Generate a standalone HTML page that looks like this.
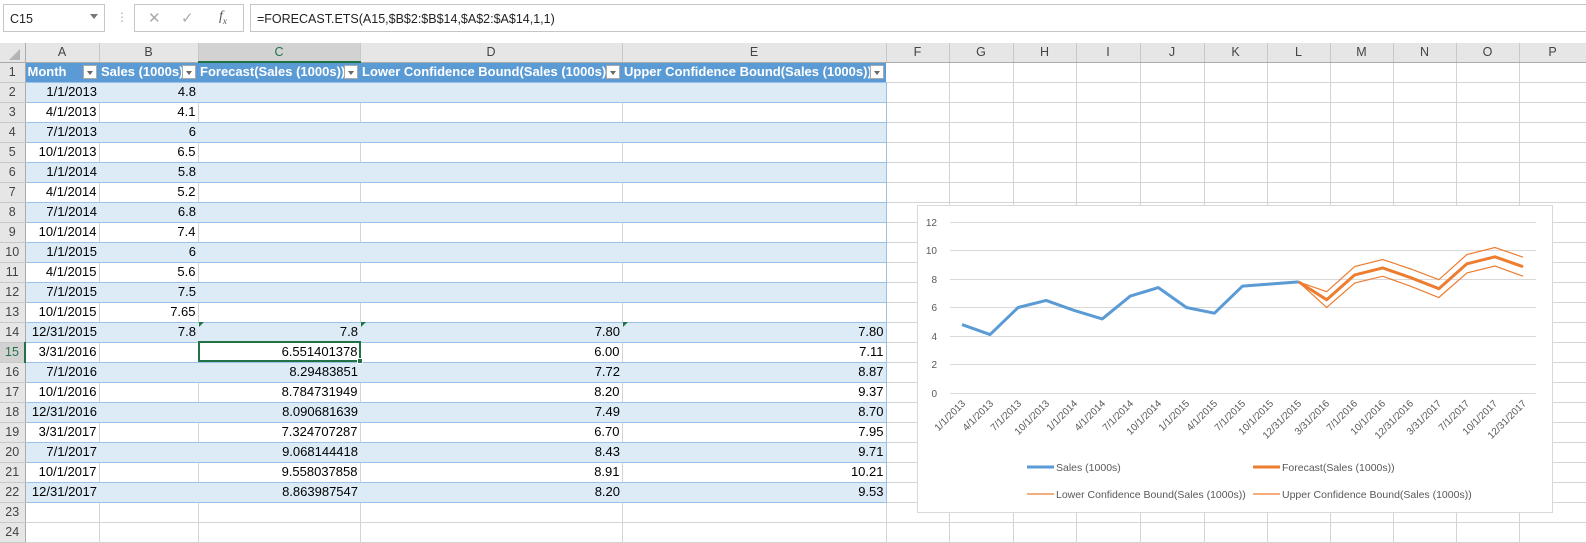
<!DOCTYPE html>
<html><head><meta charset="utf-8">
<style>
*{margin:0;padding:0;box-sizing:border-box}
body{width:1586px;height:530px;overflow:hidden;background:#fff;font-family:"Liberation Sans",sans-serif;font-size:13px;color:#000;position:relative}
.top{position:absolute;left:0;top:0;width:1586px;height:43px;background:#fff}
.nb{position:absolute;left:3px;top:4px;width:102px;height:28px;border:1px solid #c6c6c6;background:#fff;font-size:12.5px;padding:7px 0 0 6px;color:#222}
.nb span{position:absolute;right:6px;top:9px;width:0;height:0;border-left:4px solid transparent;border-right:4px solid transparent;border-top:5px solid #777}
.dots{position:absolute;left:116px;top:10px;color:#aaa;font-size:12px}
.fx{position:absolute;left:134px;top:4px;width:110px;height:28px;border:1px solid #c6c6c6;background:#fff;color:#aaa}
.fb{position:absolute;left:250px;top:4px;width:1336px;height:28px;border:1px solid #c6c6c6;border-right:none;background:#fff;font-size:12.5px;padding:7px 0 0 6px;color:#222}
table{position:absolute;left:0;top:43px;width:1586px;border-collapse:collapse;table-layout:fixed}
td{height:20px;border-right:1px solid #d4d4d4;border-bottom:1px solid #d4d4d4;white-space:nowrap;overflow:hidden;padding:0 2px;font-size:13px;line-height:18px}
tr.h td{height:19px;background:#e6e6e6;color:#444;text-align:center;border-right:1px solid #c8c8c8;border-bottom:1px solid #ababab;font-size:12.5px}
td.rh{background:#e6e6e6;color:#444;text-align:center;border-right:1px solid #ababab;border-bottom:1px solid #c8c8c8;padding:0;font-size:12.5px}
tr.t1 td.c{background:#5b9bd5;color:#fff;font-weight:bold;border-right:none;border-bottom:1px solid #9bc2e6;position:relative;padding-right:16px;text-align:left}
.dd{position:absolute;right:2px;top:2px;width:14px;height:14px;background:#fff;border:1px solid #aaa}
.dd:after{content:"";position:absolute;left:3px;top:5px;border-left:3.5px solid transparent;border-right:3.5px solid transparent;border-top:4px solid #666}
tr.b td.c{background:#ddebf7;border-right:none;border-bottom:1px solid #9bc2e6;text-align:right}
tr.w td.c{border-bottom:1px solid #9bc2e6;text-align:right}
td.e{border-right:1px solid #9bc2e6 !important}
.sel{position:absolute;left:198px;top:341px;width:163px;height:21px;border:2px solid #217346}
.hnd{position:absolute;left:357px;top:358px;width:6px;height:6px;background:#217346;border:1px solid #fff}
.tri{position:absolute;width:0;height:0;border-top:5px solid #217346;border-right:5px solid transparent}
.corner{position:absolute;left:9px;top:49px;width:0;height:0;border-left:11px solid transparent;border-bottom:11px solid #b4b4b4}
</style></head><body>
<div class="top">
<div class="nb">C15<span></span></div>
<div class="dots">⋮</div>
<div class="fx"><span style="position:absolute;left:13px;top:4px;font-size:15px">✕</span><span style="position:absolute;left:46px;top:4px;font-size:15px">✓</span><span style="position:absolute;left:84px;top:4px;font-style:italic;font-family:'Liberation Serif',serif;color:#555;font-size:14px">f<sub style="font-size:9px">x</sub></span></div>
<div class="fb">=FORECAST.ETS(A15,$B$2:$B$14,$A$2:$A$14,1,1)</div>
</div>
<table>
<colgroup><col style="width:25px"><col style="width:74px"><col style="width:99px"><col style="width:162px"><col style="width:262px"><col style="width:264px"><col style="width:63px"><col style="width:64px"><col style="width:63px"><col style="width:64px"><col style="width:64px"><col style="width:63px"><col style="width:63px"><col style="width:63px"><col style="width:63px"><col style="width:63px"><col style="width:67px"></colgroup>
<tr class="h"><td style="border-right:1px solid #ababab"></td><td>A</td><td>B</td><td style="background:#d2d2d2;color:#217346;border-bottom:2px solid #217346">C</td><td>D</td><td>E</td><td>F</td><td>G</td><td>H</td><td>I</td><td>J</td><td>K</td><td>L</td><td>M</td><td>N</td><td>O</td><td>P</td></tr>
<tr class="t1"><td class="rh">1</td><td class="c">Month<span class="dd"></span></td><td class="c">Sales (1000s)<span class="dd"></span></td><td class="c">Forecast(Sales (1000s))<span class="dd"></span></td><td class="c">Lower Confidence Bound(Sales (1000s))<span class="dd"></span></td><td class="c">Upper Confidence Bound(Sales (1000s))<span class="dd"></span></td><td></td><td></td><td></td><td></td><td></td><td></td><td></td><td></td><td></td><td></td><td></td></tr>
<tr class="b"><td class="rh">2</td><td class="c">1/1/2013</td><td class="c">4.8</td><td class="c"></td><td class="c"></td><td class="c e"></td><td></td><td></td><td></td><td></td><td></td><td></td><td></td><td></td><td></td><td></td><td></td></tr>
<tr class="w"><td class="rh">3</td><td class="c">4/1/2013</td><td class="c">4.1</td><td class="c"></td><td class="c"></td><td class="c e"></td><td></td><td></td><td></td><td></td><td></td><td></td><td></td><td></td><td></td><td></td><td></td></tr>
<tr class="b"><td class="rh">4</td><td class="c">7/1/2013</td><td class="c">6</td><td class="c"></td><td class="c"></td><td class="c e"></td><td></td><td></td><td></td><td></td><td></td><td></td><td></td><td></td><td></td><td></td><td></td></tr>
<tr class="w"><td class="rh">5</td><td class="c">10/1/2013</td><td class="c">6.5</td><td class="c"></td><td class="c"></td><td class="c e"></td><td></td><td></td><td></td><td></td><td></td><td></td><td></td><td></td><td></td><td></td><td></td></tr>
<tr class="b"><td class="rh">6</td><td class="c">1/1/2014</td><td class="c">5.8</td><td class="c"></td><td class="c"></td><td class="c e"></td><td></td><td></td><td></td><td></td><td></td><td></td><td></td><td></td><td></td><td></td><td></td></tr>
<tr class="w"><td class="rh">7</td><td class="c">4/1/2014</td><td class="c">5.2</td><td class="c"></td><td class="c"></td><td class="c e"></td><td></td><td></td><td></td><td></td><td></td><td></td><td></td><td></td><td></td><td></td><td></td></tr>
<tr class="b"><td class="rh">8</td><td class="c">7/1/2014</td><td class="c">6.8</td><td class="c"></td><td class="c"></td><td class="c e"></td><td></td><td></td><td></td><td></td><td></td><td></td><td></td><td></td><td></td><td></td><td></td></tr>
<tr class="w"><td class="rh">9</td><td class="c">10/1/2014</td><td class="c">7.4</td><td class="c"></td><td class="c"></td><td class="c e"></td><td></td><td></td><td></td><td></td><td></td><td></td><td></td><td></td><td></td><td></td><td></td></tr>
<tr class="b"><td class="rh">10</td><td class="c">1/1/2015</td><td class="c">6</td><td class="c"></td><td class="c"></td><td class="c e"></td><td></td><td></td><td></td><td></td><td></td><td></td><td></td><td></td><td></td><td></td><td></td></tr>
<tr class="w"><td class="rh">11</td><td class="c">4/1/2015</td><td class="c">5.6</td><td class="c"></td><td class="c"></td><td class="c e"></td><td></td><td></td><td></td><td></td><td></td><td></td><td></td><td></td><td></td><td></td><td></td></tr>
<tr class="b"><td class="rh">12</td><td class="c">7/1/2015</td><td class="c">7.5</td><td class="c"></td><td class="c"></td><td class="c e"></td><td></td><td></td><td></td><td></td><td></td><td></td><td></td><td></td><td></td><td></td><td></td></tr>
<tr class="w"><td class="rh">13</td><td class="c">10/1/2015</td><td class="c">7.65</td><td class="c"></td><td class="c"></td><td class="c e"></td><td></td><td></td><td></td><td></td><td></td><td></td><td></td><td></td><td></td><td></td><td></td></tr>
<tr class="b"><td class="rh">14</td><td class="c">12/31/2015</td><td class="c">7.8</td><td class="c">7.8</td><td class="c">7.80</td><td class="c e">7.80</td><td></td><td></td><td></td><td></td><td></td><td></td><td></td><td></td><td></td><td></td><td></td></tr>
<tr class="w"><td class="rh" style="background:#d2d2d2;color:#217346;border-right:2px solid #217346">15</td><td class="c">3/31/2016</td><td class="c"></td><td class="c">6.551401378</td><td class="c">6.00</td><td class="c e">7.11</td><td></td><td></td><td></td><td></td><td></td><td></td><td></td><td></td><td></td><td></td><td></td></tr>
<tr class="b"><td class="rh">16</td><td class="c">7/1/2016</td><td class="c"></td><td class="c">8.29483851</td><td class="c">7.72</td><td class="c e">8.87</td><td></td><td></td><td></td><td></td><td></td><td></td><td></td><td></td><td></td><td></td><td></td></tr>
<tr class="w"><td class="rh">17</td><td class="c">10/1/2016</td><td class="c"></td><td class="c">8.784731949</td><td class="c">8.20</td><td class="c e">9.37</td><td></td><td></td><td></td><td></td><td></td><td></td><td></td><td></td><td></td><td></td><td></td></tr>
<tr class="b"><td class="rh">18</td><td class="c">12/31/2016</td><td class="c"></td><td class="c">8.090681639</td><td class="c">7.49</td><td class="c e">8.70</td><td></td><td></td><td></td><td></td><td></td><td></td><td></td><td></td><td></td><td></td><td></td></tr>
<tr class="w"><td class="rh">19</td><td class="c">3/31/2017</td><td class="c"></td><td class="c">7.324707287</td><td class="c">6.70</td><td class="c e">7.95</td><td></td><td></td><td></td><td></td><td></td><td></td><td></td><td></td><td></td><td></td><td></td></tr>
<tr class="b"><td class="rh">20</td><td class="c">7/1/2017</td><td class="c"></td><td class="c">9.068144418</td><td class="c">8.43</td><td class="c e">9.71</td><td></td><td></td><td></td><td></td><td></td><td></td><td></td><td></td><td></td><td></td><td></td></tr>
<tr class="w"><td class="rh">21</td><td class="c">10/1/2017</td><td class="c"></td><td class="c">9.558037858</td><td class="c">8.91</td><td class="c e">10.21</td><td></td><td></td><td></td><td></td><td></td><td></td><td></td><td></td><td></td><td></td><td></td></tr>
<tr class="b"><td class="rh">22</td><td class="c">12/31/2017</td><td class="c"></td><td class="c">8.863987547</td><td class="c">8.20</td><td class="c e">9.53</td><td></td><td></td><td></td><td></td><td></td><td></td><td></td><td></td><td></td><td></td><td></td></tr>
<tr><td class="rh">23</td><td></td><td></td><td></td><td></td><td></td><td></td><td></td><td></td><td></td><td></td><td></td><td></td><td></td><td></td><td></td><td></td></tr>
<tr><td class="rh">24</td><td></td><td></td><td></td><td></td><td></td><td></td><td></td><td></td><td></td><td></td><td></td><td></td><td></td><td></td><td></td><td></td></tr>
</table>
<div class="corner"></div>
<div class="tri" style="left:199px;top:322px"></div>
<div class="tri" style="left:361px;top:322px"></div>
<div class="tri" style="left:623px;top:322px"></div>
<div class="sel"></div><div class="hnd"></div>
<svg style="position:absolute;left:0;top:0" width="1586" height="530" font-family="Liberation Sans,sans-serif">
<rect x="917.5" y="205.5" width="635" height="307" fill="#fff" stroke="#d9d9d9"/>
<g stroke="#d9d9d9" stroke-width="1">
<line x1="950" x2="1536" y1="222.5" y2="222.5"/><line x1="950" x2="1536" y1="250.5" y2="250.5"/><line x1="950" x2="1536" y1="279.5" y2="279.5"/><line x1="950" x2="1536" y1="307.5" y2="307.5"/><line x1="950" x2="1536" y1="336.5" y2="336.5"/><line x1="950" x2="1536" y1="364.5" y2="364.5"/><line x1="950" x2="1536" y1="393.5" y2="393.5"/>
</g>
<g font-size="10" fill="#595959" text-anchor="end">
<text x="937" y="226">12</text><text x="937" y="254">10</text><text x="937" y="283">8</text><text x="937" y="311">6</text><text x="937" y="340">4</text><text x="937" y="368">2</text><text x="937" y="397">0</text>
</g>
<g font-size="10" fill="#595959" text-anchor="end">
<text transform="translate(966,404) rotate(-45)">1/1/2013</text>
<text transform="translate(994,404) rotate(-45)">4/1/2013</text>
<text transform="translate(1022,404) rotate(-45)">7/1/2013</text>
<text transform="translate(1050,404) rotate(-45)">10/1/2013</text>
<text transform="translate(1078,404) rotate(-45)">1/1/2014</text>
<text transform="translate(1106,404) rotate(-45)">4/1/2014</text>
<text transform="translate(1134,404) rotate(-45)">7/1/2014</text>
<text transform="translate(1162,404) rotate(-45)">10/1/2014</text>
<text transform="translate(1190,404) rotate(-45)">1/1/2015</text>
<text transform="translate(1218,404) rotate(-45)">4/1/2015</text>
<text transform="translate(1246,404) rotate(-45)">7/1/2015</text>
<text transform="translate(1274,404) rotate(-45)">10/1/2015</text>
<text transform="translate(1302,404) rotate(-45)">12/31/2015</text>
<text transform="translate(1330,404) rotate(-45)">3/31/2016</text>
<text transform="translate(1358,404) rotate(-45)">7/1/2016</text>
<text transform="translate(1386,404) rotate(-45)">10/1/2016</text>
<text transform="translate(1414,404) rotate(-45)">12/31/2016</text>
<text transform="translate(1442,404) rotate(-45)">3/31/2017</text>
<text transform="translate(1470,404) rotate(-45)">7/1/2017</text>
<text transform="translate(1498,404) rotate(-45)">10/1/2017</text>
<text transform="translate(1527,404) rotate(-45)">12/31/2017</text>
</g>
<polyline fill="none" stroke="#ed7d31" stroke-width="1.2" points="1298.6,281.9 1326.65,307.5 1354.7,283 1382.75,276.2 1410.8,286.3 1438.85,297.5 1466.9,272.9 1494.95,266 1523,276.2"/>
<polyline fill="none" stroke="#ed7d31" stroke-width="1.2" points="1298.6,281.9 1326.65,291.7 1354.7,266.6 1382.75,259.5 1410.8,269 1438.85,279.7 1466.9,254.6 1494.95,247.5 1523,257.2"/>
<polyline fill="none" stroke="#ed7d31" stroke-width="3" stroke-linejoin="round" points="1298.6,281.9 1326.65,299.7 1354.7,274.9 1382.75,267.9 1410.8,277.7 1438.85,288.7 1466.9,263.8 1494.95,256.8 1523,266.7"/>
<polyline fill="none" stroke="#5b9bd5" stroke-width="3" stroke-linejoin="round" points="962,324.6 990.05,334.6 1018.1,307.5 1046.15,300.4 1074.2,310.4 1102.25,318.9 1130.3,296.1 1158.35,287.6 1186.4,307.5 1214.45,313.2 1242.5,286.1 1270.55,284 1298.6,281.9"/>
<g font-size="10.5" fill="#595959">
<line x1="1027" x2="1054" y1="467" y2="467" stroke="#5b9bd5" stroke-width="3"/><text x="1056" y="471">Sales (1000s)</text>
<line x1="1253" x2="1280" y1="467" y2="467" stroke="#ed7d31" stroke-width="3"/><text x="1282" y="471">Forecast(Sales (1000s))</text>
<line x1="1027" x2="1054" y1="494" y2="494" stroke="#ed7d31" stroke-width="1.2"/><text x="1056" y="498">Lower Confidence Bound(Sales (1000s))</text>
<line x1="1253" x2="1280" y1="494" y2="494" stroke="#ed7d31" stroke-width="1.2"/><text x="1282" y="498">Upper Confidence Bound(Sales (1000s))</text>
</g>
</svg>
</body></html>
